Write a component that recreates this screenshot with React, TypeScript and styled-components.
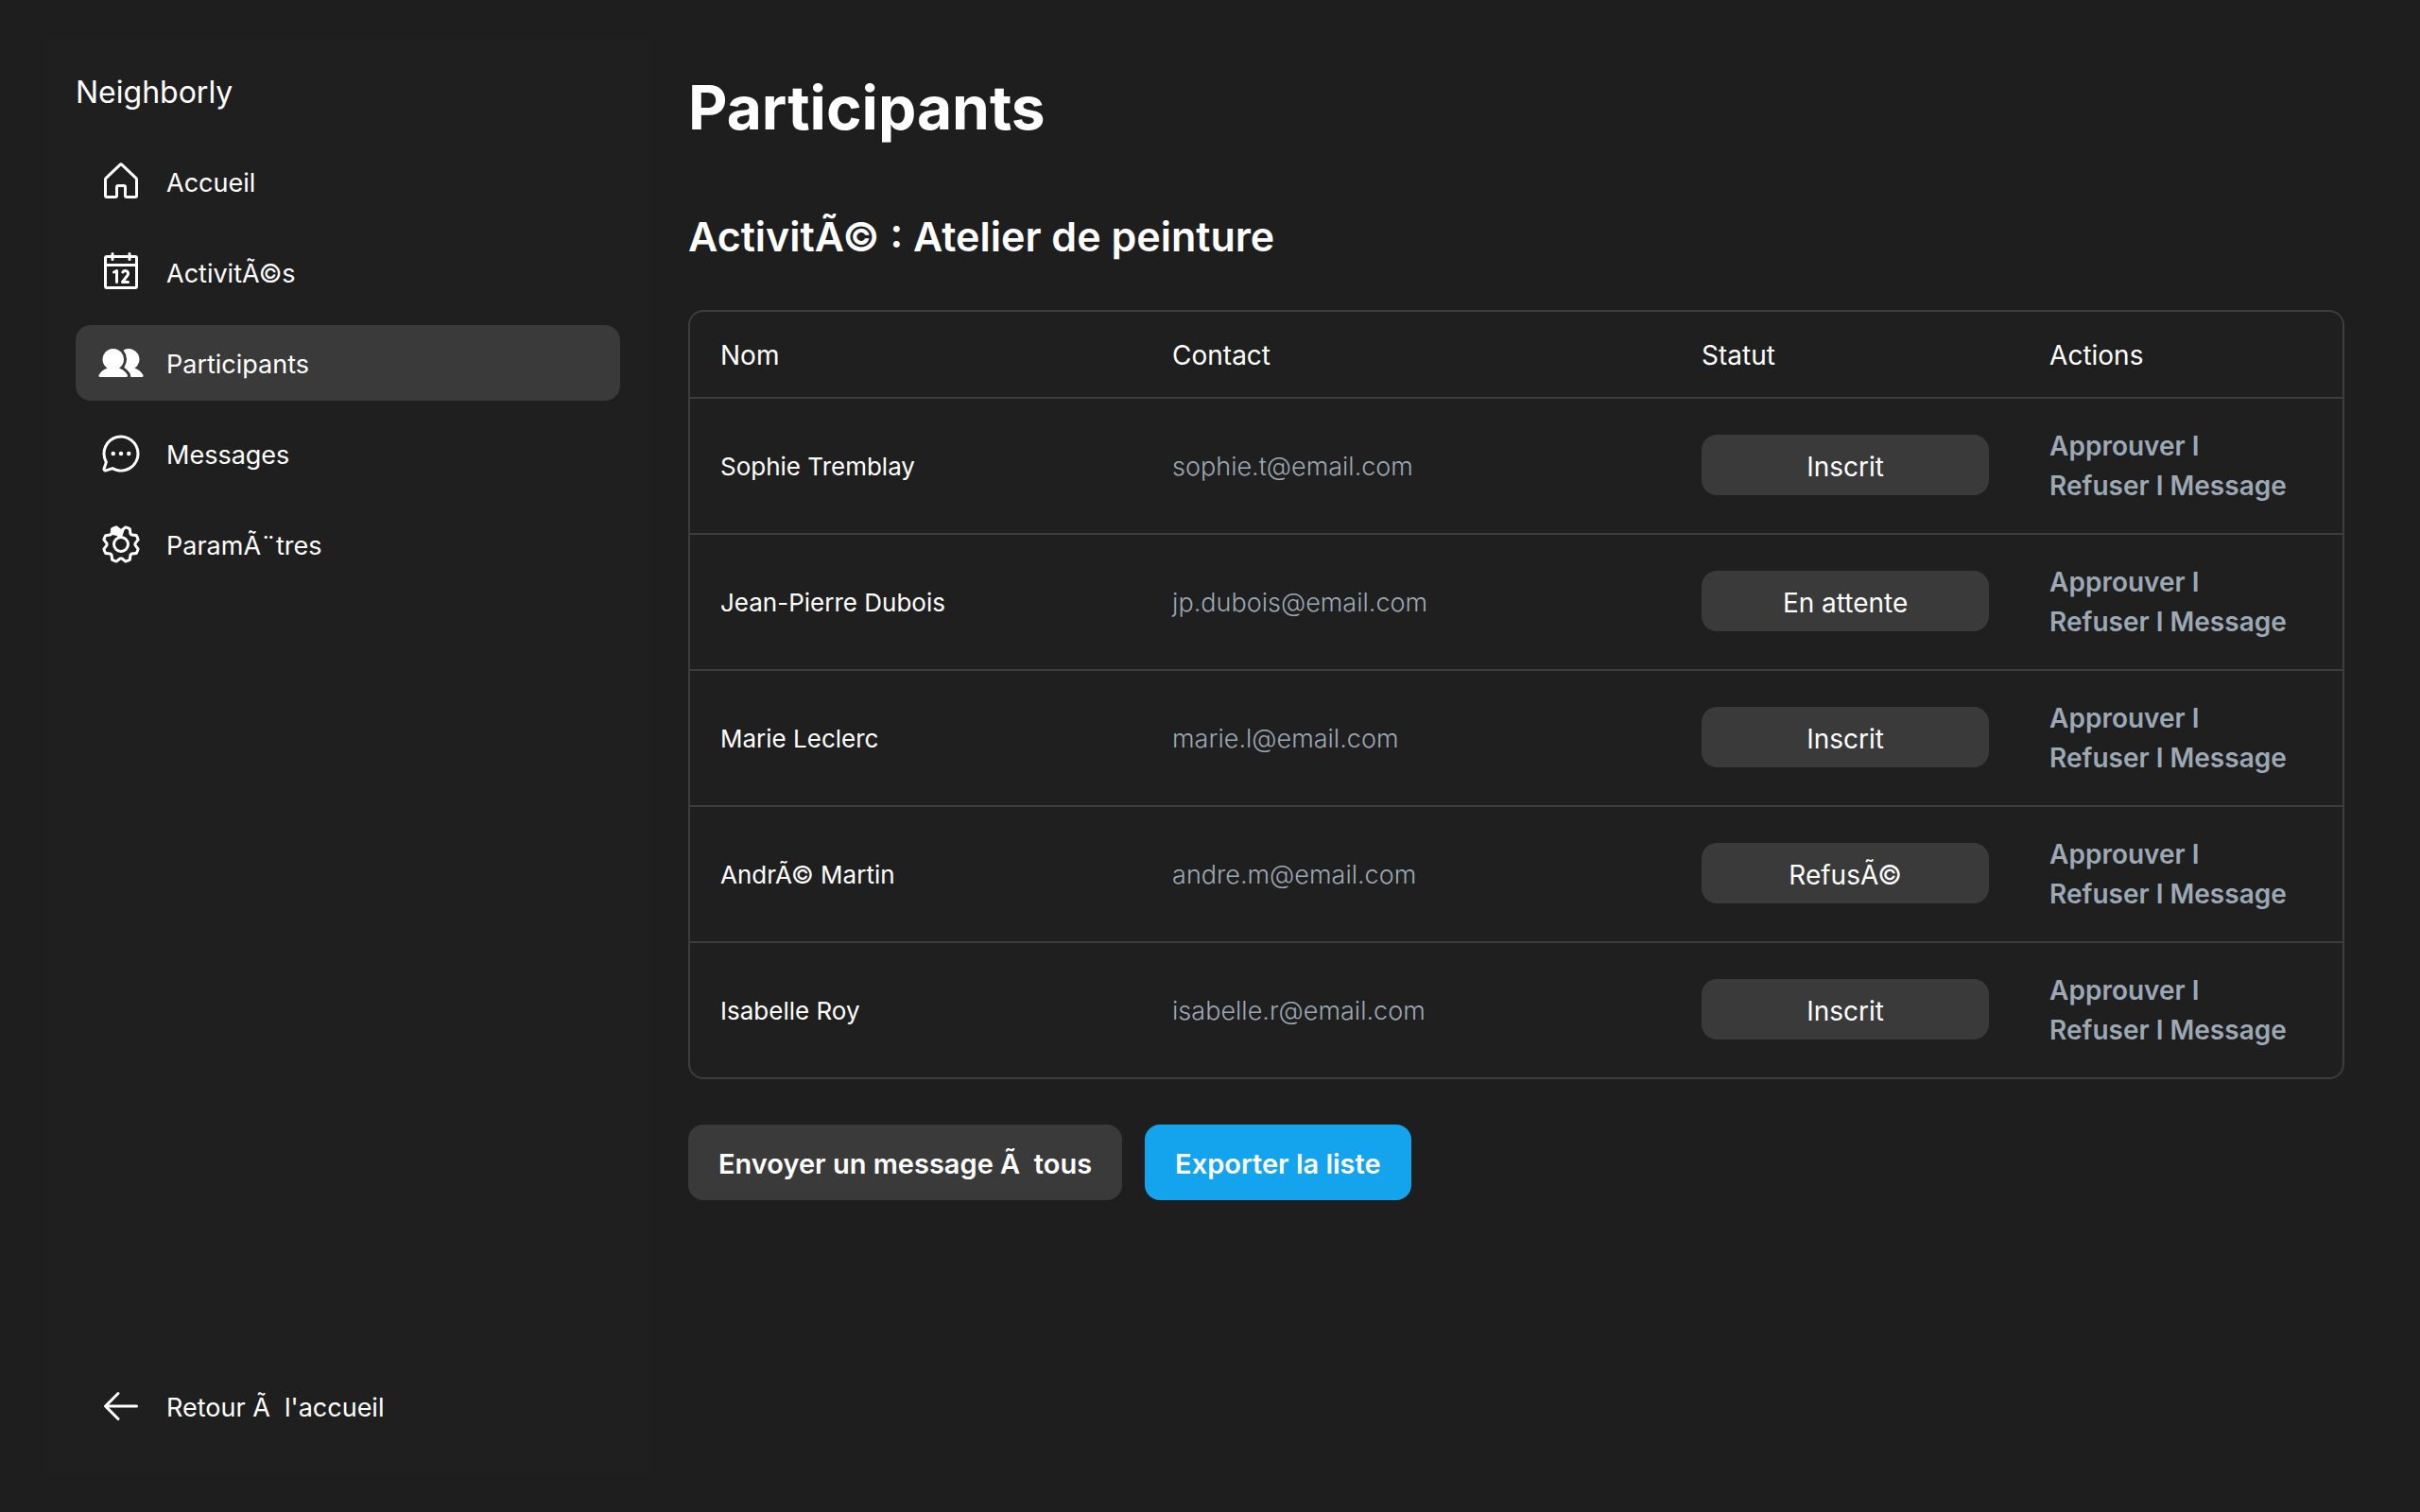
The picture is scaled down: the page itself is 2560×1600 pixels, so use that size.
import React from "react";
import styled, { createGlobalStyle } from "styled-components";

const color = {
  page: "#1e1e1e",
  panel: "#1f1f1f",
  raised: "#3a3a3a",
  line: "#3d3d3d",
  text: "#ffffff",
  muted: "#9ca8b3",
  accent: "#14a3ed",
};

const GlobalStyle = createGlobalStyle`
  *, *::before, *::after { box-sizing: border-box; }
  body {
    margin: 0;
    background: ${color.page};
    color: ${color.text};
    font-family: Inter, "Noto Sans", sans-serif;
    font-size: 28px;
    line-height: 42px;
  }
  button { font: inherit; color: inherit; border: 0; cursor: pointer; }
`;

const Page = styled.div`
  display: flex;
  gap: 8px;
  min-height: 100vh;
  padding: 40px 48px;
`;

const Sidebar = styled.aside`
  display: flex;
  flex: 0 0 640px;
  flex-direction: column;
  justify-content: space-between;
  gap: 32px;
  padding: 32px;
  background: ${color.panel};
`;

const Brand = styled.div`
  padding: 2px 0 30px;
  font-size: 32px;
  line-height: 48px;
`;

const Nav = styled.nav`
  display: flex;
  flex-direction: column;
  gap: 16px;
`;

const NavLink = styled.a<{ $active?: boolean }>`
  display: flex;
  align-items: center;
  gap: 24px;
  height: 80px;
  padding: 0 24px;
  border-radius: 16px;
  background: ${(p) => (p.$active ? color.raised : "transparent")};
  color: ${color.text};
  font-size: 27px;
  text-decoration: none;
`;

const NavLabel = styled.span`
  padding-top: 4px;
`;

const Glyph = styled.svg`
  flex: none;
  width: 48px;
  height: 48px;
  fill: currentColor;
`;

const Main = styled.main`
  flex: 1;
  min-width: 0;
  padding: 32px;
`;

const Title = styled.h1`
  margin: 0;
  padding: 2px 0 30px;
  font-size: 64px;
  font-weight: 700;
  line-height: 80px;
`;

const Subtitle = styled.h2`
  margin: 0;
  padding: 38px 0 26px;
  font-size: 43px;
  font-weight: 600;
  line-height: 56px;
`;

const TableFrame = styled.div`
  margin: 24px 0;
  overflow: hidden;
  border: 2px solid ${color.line};
  border-radius: 16px;
  background: ${color.panel};
`;

const Table = styled.table`
  width: 100%;
  table-layout: fixed;
  border-collapse: separate;
  border-spacing: 0;
`;

const HeadCell = styled.th<{ $share: number }>`
  width: ${(p) => p.$share}%;
  height: 90px;
  padding: 2px 32px 0;
  font-weight: 400;
  text-align: left;
`;

const Cell = styled.td`
  height: 144px;
  padding: 0 32px 2px;
  border-top: 2px solid ${color.line};
`;

const NameCell = styled(Cell)`
  padding: 2px 32px 0;
  font-size: 26px;
`;

const ContactCell = styled(Cell)`
  padding: 2px 32px 0;
  color: ${color.muted};
  font-size: 27px;
  font-weight: 350;
`;

const ActionsCell = styled(Cell)`
  padding: 0 32px;
  color: ${color.muted};
  font-weight: 600;
`;

const StatusButton = styled.button`
  display: block;
  width: 100%;
  height: 64px;
  padding: 4px 32px 0;
  border-radius: 16px;
  background: ${color.raised};
  text-align: center;
`;

const ActionLine = styled.div`
  white-space: nowrap;
`;

const TextButton = styled.button`
  padding: 0;
  background: none;
`;

const ButtonRow = styled.div`
  display: flex;
  flex-wrap: wrap;
  gap: 24px;
  padding: 24px 0;
`;

const Button = styled.button<{ $primary?: boolean }>`
  height: 80px;
  padding: 4px 32px 0;
  border-radius: 16px;
  background: ${(p) => (p.$primary ? color.accent : color.raised)};
  color: ${color.text};
  font-size: 29px;
  font-weight: 600;
`;

const icons = {
  house: [
    "M218.83,103.77l-80-75.48a1.14,1.14,0,0,1-.11-.11,16,16,0,0,0-21.53,0l-.11.11L37.17,103.77A16,16,0,0,0,32,115.55V208a16,16,0,0,0,16,16H96a16,16,0,0,0,16-16V160h32v48a16,16,0,0,0,16,16h48a16,16,0,0,0,16-16V115.55A16,16,0,0,0,218.83,103.77ZM208,208H160V160a16,16,0,0,0-16-16H112a16,16,0,0,0-16,16v48H48V115.55l.11-.1L128,40l79.9,75.43.11.1Z",
  ],
  calendar: [
    "M208,32H184V24a8,8,0,0,0-16,0v8H88V24a8,8,0,0,0-16,0v8H48A16,16,0,0,0,32,48V208a16,16,0,0,0,16,16H208a16,16,0,0,0,16-16V48A16,16,0,0,0,208,32ZM72,48v8a8,8,0,0,0,16,0V48h80v8a8,8,0,0,0,16,0V48h24V80H48V48ZM208,208H48V96H208V208Zm-96-88v64a8,8,0,0,1-16,0V132.94l-4.42,2.22a8,8,0,0,1-7.16-14.32l16-8A8,8,0,0,1,112,120Zm59.16,30.45L152,176h16a8,8,0,0,1,0,16H136a8,8,0,0,1-6.4-12.8l28.78-38.37A8,8,0,1,0,145.07,132a8,8,0,1,1-13.85-8A24,24,0,0,1,176,136,23.76,23.76,0,0,1,171.16,150.45Z",
  ],
  users: [
    "M164.47,195.63a8,8,0,0,1-6.7,12.37H10.23a8,8,0,0,1-6.7-12.37,95.83,95.83,0,0,1,47.22-37.71,60,60,0,1,1,66.5,0A95.83,95.83,0,0,1,164.47,195.63Zm87.91-.15a95.87,95.87,0,0,0-47.13-37.56A60,60,0,0,0,144.7,54.59a4,4,0,0,0-1.33,6A75.83,75.83,0,0,1,147,150.53a4,4,0,0,0,1.07,5.53,112.32,112.32,0,0,1,29.85,30.83,23.92,23.92,0,0,1,3.65,16.47,4,4,0,0,0,3.95,4.64h60.3a8,8,0,0,0,7.73-5.93A8.22,8.22,0,0,0,252.38,195.48Z",
  ],
  chat: [
    "M140,128a12,12,0,1,1-12-12A12,12,0,0,1,140,128ZM84,116a12,12,0,1,0,12,12A12,12,0,0,0,84,116Zm88,0a12,12,0,1,0,12,12A12,12,0,0,0,172,116Zm60,12A104,104,0,0,1,79.12,219.82L45.07,231.17a16,16,0,0,1-20.24-20.24l11.35-34.05A104,104,0,1,1,232,128Zm-16,0A88,88,0,1,0,51.81,172.06a8,8,0,0,1,.66,6.54L40,216,77.4,203.53a7.85,7.85,0,0,1,2.53-.42,8,8,0,0,1,4,1.08A88,88,0,0,0,216,128Z",
  ],
  gear: [
    "M128,80a48,48,0,1,0,48,48A48.05,48.05,0,0,0,128,80Zm0,80a32,32,0,1,1,32-32A32,32,0,0,1,128,160Zm88-29.84q.06-2.16,0-4.32l14.92-18.64a8,8,0,0,0,1.48-7.06,107.21,107.21,0,0,0-10.88-26.25,8,8,0,0,0-6-3.93l-23.72-2.64q-1.48-1.56-3-3L186,40.54a8,8,0,0,0-3.94-6,107.71,107.71,0,0,0-26.25-10.87,8,8,0,0,0-7.06,1.49L130.16,40Q128,40,125.84,40L107.2,25.11a8,8,0,0,0-7.06-1.48A107.6,107.6,0,0,0,73.89,34.51a8,8,0,0,0-3.93,6L67.32,64.27q-1.56,1.49-3,3L40.54,70a8,8,0,0,0-6,3.94,107.71,107.71,0,0,0-10.87,26.25,8,8,0,0,0,1.49,7.06L40,125.84Q40,128,40,130.16L25.11,148.8a8,8,0,0,0-1.48,7.06,107.21,107.21,0,0,0,10.88,26.25,8,8,0,0,0,6,3.93l23.72,2.64q1.49,1.56,3,3L70,215.46a8,8,0,0,0,3.94,6,107.71,107.71,0,0,0,26.25,10.87,8,8,0,0,0,7.06-1.49L125.84,216q2.16.06,4.32,0l18.64,14.92a8,8,0,0,0,7.06,1.48,107.21,107.21,0,0,0,26.25-10.88,8,8,0,0,0,3.93-6l2.64-23.72q1.56-1.48,3-3L215.46,186a8,8,0,0,0,6-3.94,107.71,107.71,0,0,0,10.87-26.25,8,8,0,0,0-1.49-7.06Zm-16.1-6.5a73.93,73.93,0,0,1,0,8.68,8,8,0,0,0,1.74,5.48l14.19,17.73a91.57,91.57,0,0,1-6.23,15L187,173.11a8,8,0,0,0-5.1,2.64,74.11,74.11,0,0,1-6.14,6.14,8,8,0,0,0-2.64,5.1l-2.51,22.58a91.32,91.32,0,0,1-15,6.23l-17.74-14.19a8,8,0,0,0-5-1.75h-.48a73.93,73.93,0,0,1-8.68,0,8,8,0,0,0-5.48,1.74L100.45,215.8a91.57,91.57,0,0,1-15-6.23L82.89,187a8,8,0,0,0-2.64-5.1,74.11,74.11,0,0,1-6.14-6.14,8,8,0,0,0-5.1-2.64L46.43,170.6a91.32,91.32,0,0,1-6.23-15l14.19-17.74a8,8,0,0,0,1.74-5.48,73.93,73.93,0,0,1,0-8.68,8,8,0,0,0-1.74-5.48L40.2,100.45a91.57,91.57,0,0,1,6.23-15L69,82.89a8,8,0,0,0,5.1-2.64,74.11,74.11,0,0,1,6.14-6.14A8,8,0,0,0,82.89,69L85.4,46.43a91.32,91.32,0,0,1,15-6.23l17.74,14.19a8,8,0,0,0,5.48,1.74,73.93,73.93,0,0,1,8.68,0,8,8,0,0,0,5.48-1.74L155.55,40.2a91.57,91.57,0,0,1,15,6.23L173.11,69a8,8,0,0,0,2.64,5.1,74.11,74.11,0,0,1,6.14,6.14,8,8,0,0,0,5.1,2.64l22.58,2.51a91.32,91.32,0,0,1,6.23,15l-14.19,17.74A8,8,0,0,0,199.87,123.66Z",
    "M74,40L96,28L112,36L128,46L150,36L144,56L134,86L110,94L106,80L84,76L72,62Z",
  ],
  back: [
    "M224,128a8,8,0,0,1-8,8H59.31l58.35,58.34a8,8,0,0,1-11.32,11.32l-72-72a8,8,0,0,1,0-11.32l72-72a8,8,0,0,1,11.32,11.32L59.31,120H216A8,8,0,0,1,224,128Z",
  ],
};

type IconName = keyof typeof icons;

function Icon({ name }: { name: IconName }) {
  return (
    <Glyph viewBox="0 0 256 256" aria-hidden="true">
      {icons[name].map((d) => (
        <path key={d} d={d} />
      ))}
    </Glyph>
  );
}

const links: { icon: IconName; label: string; active?: boolean }[] = [
  { icon: "house", label: "Accueil" },
  { icon: "calendar", label: "ActivitÃ©s" },
  { icon: "users", label: "Participants", active: true },
  { icon: "chat", label: "Messages" },
  { icon: "gear", label: "ParamÃ¨tres" },
];

const columns = [
  { label: "Nom", share: 27.35 },
  { label: "Contact", share: 32.04 },
  { label: "Statut", share: 21.05 },
  { label: "Actions", share: 19.56 },
];

const participants = [
  { name: "Sophie Tremblay", email: "sophie.t@email.com", status: "Inscrit" },
  { name: "Jean-Pierre Dubois", email: "jp.dubois@email.com", status: "En attente" },
  { name: "Marie Leclerc", email: "marie.l@email.com", status: "Inscrit" },
  { name: "AndrÃ© Martin", email: "andre.m@email.com", status: "RefusÃ©" },
  { name: "Isabelle Roy", email: "isabelle.r@email.com", status: "Inscrit" },
];

export default function App() {
  return (
    <>
      <GlobalStyle />
      <Page>
        <Sidebar>
          <div>
            <Brand>Neighborly</Brand>
            <Nav>
              {links.map((l) => (
                <NavLink
                  key={l.label}
                  href="#"
                  $active={l.active}
                  aria-current={l.active ? "page" : undefined}
                >
                  <Icon name={l.icon} />
                  <NavLabel>{l.label}</NavLabel>
                </NavLink>
              ))}
            </Nav>
          </div>
          <NavLink href="#">
            <Icon name="back" />
            <NavLabel>{"Retour Ã\u00a0 l'accueil"}</NavLabel>
          </NavLink>
        </Sidebar>
        <Main>
          <Title>Participants</Title>
          <Subtitle>ActivitÃ© : Atelier de peinture</Subtitle>
          <TableFrame>
            <Table>
              <thead>
                <tr>
                  {columns.map((c) => (
                    <HeadCell key={c.label} scope="col" $share={c.share}>
                      {c.label}
                    </HeadCell>
                  ))}
                </tr>
              </thead>
              <tbody>
                {participants.map((p) => (
                  <tr key={p.email}>
                    <NameCell>{p.name}</NameCell>
                    <ContactCell>{p.email}</ContactCell>
                    <Cell>
                      <StatusButton type="button">{p.status}</StatusButton>
                    </Cell>
                    <ActionsCell>
                      <ActionLine>
                        <TextButton type="button">Approuver</TextButton> I
                      </ActionLine>
                      <ActionLine>
                        <TextButton type="button">Refuser</TextButton> I{" "}
                        <TextButton type="button">Message</TextButton>
                      </ActionLine>
                    </ActionsCell>
                  </tr>
                ))}
              </tbody>
            </Table>
          </TableFrame>
          <ButtonRow>
            <Button type="button">{"Envoyer un message Ã\u00a0 tous"}</Button>
            <Button type="button" $primary>
              Exporter la liste
            </Button>
          </ButtonRow>
        </Main>
      </Page>
    </>
  );
}
